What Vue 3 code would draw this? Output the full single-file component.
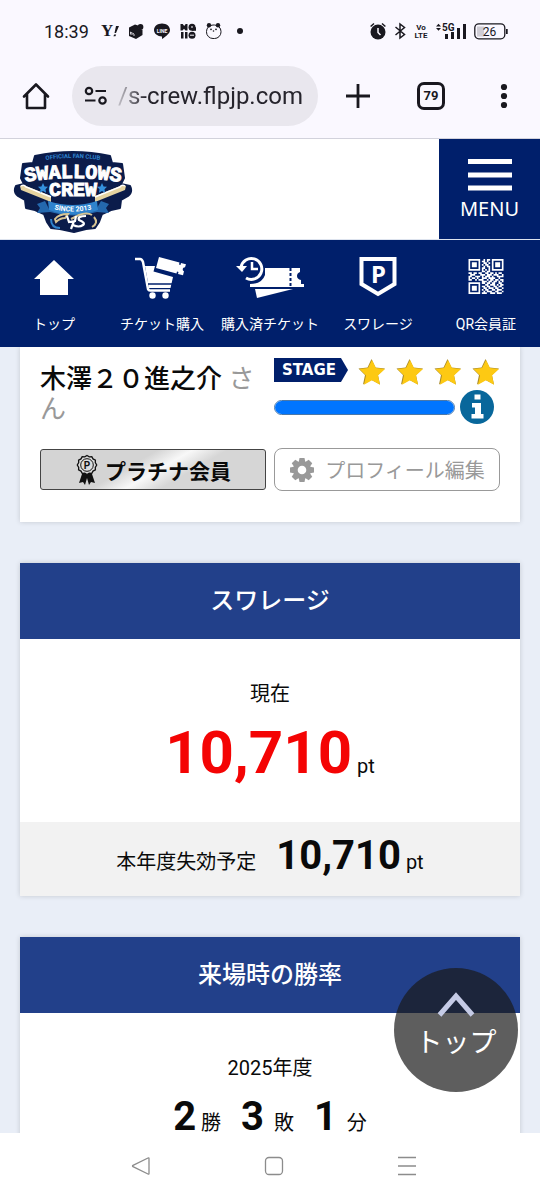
<script setup>
const url = '/s-crew.flpjp.com'

const navItems = [
  { id: 'home', label: 'トップ' },
  { id: 'cart', label: 'チケット購入' },
  { id: 'bought', label: '購入済チケット' },
  { id: 'point', label: 'スワレージ' },
  { id: 'qr', label: 'QR会員証' },
]

const qrRows = [
  '111111100101101111111',
  '100000101101001000001',
  '101110100110101011101',
  '101110101011001011101',
  '101110100101101011101',
  '100000101100101000001',
  '111111101010101111111',
  '000000001101100000000',
  '110110110011011010110',
  '011100011101110111001',
  '110011101011101001111',
  '101101001110111100100',
  '110010111001011011011',
  '000000001110110110101',
  '111111101101101100110',
  '100000100011011101011',
  '101110101101100110110',
  '101110100110111011001',
  '101110101011001101110',
  '100000100101110011001',
  '111111101110011101110',
]
const qrCells = qrRows.flatMap((row, y) =>
  [...row].flatMap((c, x) => (c === '1' ? [`M${x} ${y}h1v1h-1z`] : []))
).join('')

const results = [
  { value: '2', unit: '\u00a0勝' },
  { value: '3', unit: '\u00a0\u00a0敗' },
  { value: '1', unit: '\u00a0\u00a0分' },
]
</script>

<template>
  <div class="screen">
    <div class="status">
      <div class="status-left">
        <span class="time">18:39</span>
        <svg viewBox="0 0 18 18" width="18" height="18"><text x="0" y="14" class="yahoo">Y</text><path d="M15 4h3l-3 7h-1.500zM13.200 12.500h2l-.8 1.800h-2z" /></svg>
        <svg viewBox="0 0 18 18" width="18" height="18"><path d="M2 5.500l6-3 3 1v3l4.500 1.500v5L9 17l-7-3z" /><circle cx="13.500" cy="5" r="2.900" /><path d="M3.500 12.500V10l1.500 1v2M5.500 11l1.500 1v2" fill="none" stroke="#faf8ff" stroke-width=".8" /></svg>
        <svg viewBox="0 0 18 18" width="18" height="18"><path d="M9 1.500c4.500 0 8 2.800 8 6.500 0 3.300-3.500 6-8 9v-2.600C4.500 14.400 1 11.700 1 8s3.500-6.500 8-6.500z" /><text x="9" y="10.500" class="line">LINE</text></svg>
        <svg viewBox="0 0 18 18" width="18" height="18"><path d="M1.500 2h2.200l1.500 2 1.500-2h1.800v6.500H6.500L5 6.700 3.500 8.500h-2zM2 10h2.500v6.500H2zM6 10h2.500v6.500H6z" /><circle cx="13" cy="5.300" r="3.500" /><circle cx="13" cy="13.200" r="3.500" /><path d="M13 5.300h4v3.500h-4z" /><path d="M12 5h2M11 13.200h4" stroke="#faf8ff" /></svg>
        <svg viewBox="0 0 18 18" width="18" height="18"><rect x="1.500" y="3" width="14.500" height="13.500" rx="6.500" fill="none" stroke="#19181f" /><circle cx="4" cy="3.300" r="2.200" /><circle cx="13" cy="3.300" r="2.200" /><circle cx="6" cy="7.300" r=".9" /><circle cx="11" cy="7.300" r=".9" /><circle cx="8.500" cy="9" r=".8" /></svg>
        <svg viewBox="0 0 18 18" width="18" height="18"><circle cx="9" cy="9" r="3" /></svg>
      </div>
      <div class="status-right">
        <svg viewBox="0 0 16 18" width="16" height="18"><circle cx="8" cy="10" r="7.500" /><path d="M.6 4.500L4 1.500M15.400 4.500L12 1.500" stroke="#19181f" stroke-width="1.500" /><path d="M8 6v4.500l2.500 2.500" fill="none" stroke="#faf8ff" stroke-width="1.500" /></svg>
        <svg viewBox="0 0 12 18" width="12" height="18"><path d="M1.500 5l9 7.500L6 16V2l4.500 3.500-9 7.500" fill="none" stroke="#19181f" stroke-width="1.500" /></svg>
        <svg viewBox="0 0 14 18" width="14" height="18"><text x="7" y="8" class="tiny">Vo</text><text x="7" y="16" class="tiny">LTE</text></svg>
        <svg viewBox="0 0 30 18" width="30" height="18"><path d="M0 4.500l2.500-2.800L5 4.500zM0 6h5L2.500 8.800zM9 12h3v5H9zM15 10h3v7h-3zM21 6h3v11h-3zM27 2h3v15h-3z" /><text x="6" y="9" class="five">5G</text></svg>
        <svg viewBox="0 0 34 18" width="34" height="18"><path d="M3 4.500h7v10H3z" fill="#cfcdd5" /><rect x=".8" y="1.800" width="30" height="15" rx="4" fill="none" stroke="#19181f" stroke-width="1.300" /><path d="M32 7h1.700v5H32z" /><text x="15.500" y="13.500" class="batt">26</text></svg>
      </div>
    </div>

    <div class="toolbar">
      <button class="home-btn" aria-label="ホーム">
        <svg viewBox="0 0 28 28" width="28" height="28"><path d="M2 14.500L14 2.500l12 12M5 12v14h18V12" fill="none" stroke="#19181f" stroke-width="2.600" stroke-linejoin="round" stroke-linecap="round" /></svg>
      </button>
      <div class="pill">
        <svg viewBox="0 0 24 20" width="24" height="20"><g fill="none" stroke="#19181f" stroke-width="2.200"><circle cx="5" cy="5" r="3.200" /><circle cx="18.500" cy="14.500" r="3.200" /><path d="M11.500 5H22M1 14.500h10.500" /></g></svg>
        <input class="url" type="text" :value="url" aria-label="アドレス" readonly />
      </div>
      <div class="tools">
        <button class="tool" aria-label="新しいタブ">
          <svg viewBox="0 0 24 24" width="24" height="24"><path d="M12 0v24M0 12h24" stroke="#19181f" stroke-width="2.800" /></svg>
        </button>
        <button class="tool" aria-label="タブ 79"><span class="tabs">79</span></button>
        <button class="tool" aria-label="メニュー">
          <svg viewBox="0 0 8 26" width="8" height="26"><circle cx="4" cy="4" r="3.100" /><circle cx="4" cy="13" r="3.100" /><circle cx="4" cy="22" r="3.100" /></svg>
        </button>
      </div>
    </div>

    <header class="site-head">
      <a class="logo" href="#" aria-label="SWALLOWS CREW">
        <svg viewBox="0 0 120 84" width="120" height="84">
          <path d="M22 7Q60-1 97 7l2 7 10 1 2 14-3 6 9 2q3 6-2 10l-7 4-1 8-9 2-9 4-3 8-4 6-9 1-12 3-14-3-9-1-4-6-3-8-9-4-9-2-1-8-7-4q-5-4-2-10l8-2-3-6 2-14 10-1z" fill="#0b1c4b" stroke="#0b1c4b" stroke-width="2" stroke-linejoin="round" />
          <path d="M7 37q3-2 6 0l25 10v6L8 41zM113 37q-3-2-6 0L82 47v6l30-12z" fill="#e5d3a0" />
          <path d="M8 37q3-2 5 1l25 10M112 37q-3-2-5 1L82 48" fill="none" stroke="#fff" stroke-width="1.500" />
          <path d="M24 55l8-3 4 8 48-1 4-7 8 3-3 4 3 5-12-1Q60 70 37 63l-13 1 3-5z" fill="#2468ae" />
          <path d="M35 52q25 8 49 0l1 9q-25 9-49 0z" fill="#2f83cd" />
          <path d="M30 34l1.600 3.400 3.400.4-2.500 2.400.6 3.600-3.100-1.800-3.100 1.800.6-3.600-2.500-2.400 3.400-.4zM89 34l1.600 3.400 3.400.4-2.500 2.400.6 3.600-3.100-1.800-3.100 1.800.6-3.600-2.500-2.400 3.400-.4z" fill="#3490dd" />
          <path d="M42 70q4-5 13-5l-3 4q-5 0-9 4zM79 66q-5-3-13 0l-8 4M81 68q5 6-2 10" fill="none" stroke="#d7c493" stroke-width="2" />
          <path d="M38 70q0 9 9 9" fill="none" stroke="#2f83cd" stroke-width="2" />
          <path id="club-arc" d="M22 13Q60 5 98 13" fill="none" />
          <path id="team-arc" d="M6 34Q60 24 114 34" fill="none" />
          <path id="since-arc" d="M35 59Q60 66 85 59" fill="none" />
          <text class="lg-club"><textPath href="#club-arc" startOffset="50%">OFFICIAL FAN CLUB</textPath></text>
          <text class="lg-team"><textPath href="#team-arc" startOffset="50%">SWALLOWS</textPath></text>
          <text x="60" y="47" class="lg-team">CREW</text>
          <text class="lg-since"><textPath href="#since-arc" startOffset="50%">SINCE 2013</textPath></text>
          <path d="M54 67l2 6 6-1 1-5M61 72l-3 8M73 67q-9 0-7 4 7 3 4 5-4 3-10 0" fill="none" stroke="#fff" stroke-width="2.200" />
        </svg>
      </a>
      <button class="menu">
        <svg viewBox="0 0 44 34" width="44" height="34"><path d="M0 1h44v5H0zM0 14.500h44v5H0zM0 27.500h44v5H0z" fill="#fff" /></svg>
        <span>MENU</span>
      </button>
    </header>

    <nav class="site-nav">
      <a v-for="n in navItems" :key="n.id" href="#" class="nav-item">
        <svg v-if="n.id === 'home'" viewBox="0 0 72 48" width="72" height="48"><path d="M36 6L56 25h-6v16H22V25h-6z" /></svg>
        <svg v-else-if="n.id === 'cart'" viewBox="0 0 72 48" width="72" height="48">
          <path d="M9 5h5q2 0 3 3l5 27q.5 1.500 2 1.500h20" fill="none" stroke="#fff" stroke-width="2.500" />
          <path d="M19 12h10l-1.500 5.500L47 23l-2.500 11H23z" />
          <path d="M22 30h24" stroke="#001f6b" stroke-width="1.500" />
          <path d="M33 3l20.500 5.500-.5 2 1.500.4.500-2 5 1.300-1 3q-2 0-2.300 1.800-.2 1.700 1.300 2.300l-1 4-5-1.300.5-2-1.500-.4-.5 2L30 14z" />
          <circle cx="26.500" cy="41.500" r="3.200" /><circle cx="39.500" cy="41.500" r="3.200" />
        </svg>
        <svg v-else-if="n.id === 'bought'" viewBox="0 0 72 48" width="72" height="48">
          <path d="M7 13A10.500 10.500 0 1 1 12 24" fill="none" stroke="#fff" stroke-width="3" />
          <path d="M2 12h11l-5 6z" /><path d="M18 8v7h6" fill="none" stroke="#fff" stroke-width="2.500" />
          <path d="M31 14h35v4q-3 1-3 4t4 4v4h3v3H16v-3q12 0 15-9z" />
          <path d="M56.500 14v19" stroke="#001f6b" stroke-width="2" stroke-dasharray="3 2" />
          <path d="M21 35h38L23 44z" />
        </svg>
        <svg v-else-if="n.id === 'point'" viewBox="0 0 72 48" width="72" height="48">
          <path d="M19.500 5h33v25L36 40 19.500 30z" fill="none" stroke="#fff" stroke-width="4" />
          <text x="36.500" y="29" class="p-mark">P</text>
        </svg>
        <svg v-else viewBox="0 0 72 48" width="72" height="48"><g transform="translate(18.500 5) scale(1.667)"><path :d="qrCells" /></g></svg>
        <span>{{ n.label }}</span>
      </a>
    </nav>

    <main class="page">
      <section class="card profile">
        <p class="name"><strong>木澤２０進之介</strong> さん</p>
        <div class="rank">
          <div class="stage-row">
            <span class="stage">STAGE</span>
            <div class="stars">
              <svg v-for="i in 4" :key="i" viewBox="0 0 28 28" width="28" height="28"><path d="M13.500 1l4 8.500 9.500 1-7 6.500 2 9.500-8.500-4.500L5 26.500 7 17 .5 10.500l9-1z" fill="#a98a28" /><path d="M14 2l4 8 9 1-7 6.500 2 9.200-8-4.500-8 4.500L8 17.500 1.500 11l8.500-1z" fill="#fdc913" /></svg>
            </div>
          </div>
          <div class="progress-row">
            <progress class="bar" value="100" max="100" aria-label="ステージ進捗"></progress>
            <button class="info" aria-label="ステージについて">
              <svg viewBox="0 0 34 34" width="34" height="34"><circle cx="17" cy="17" r="17" fill="#08679b" /><path d="M14.500 4.500h6v5h-6zM12 13h9v11h2.500v4.500h-12V24H15v-6.500h-3z" fill="#fff" /></svg>
            </button>
          </div>
        </div>
        <button class="grade">
          <svg viewBox="0 0 24 32" width="24" height="32">
            <path d="M7 20l-3 9 4-1 2 3 2-7 2 7 2-3 4 1-3-9z" fill="#111" />
            <path d="M12 1.500l2.200 1.300 2.600-.2 1.200 2.300 2.400 1.200-.1 2.600 1.400 2.300-1.400 2.300.1 2.600-2.400 1.200-1.200 2.300-2.600-.2L12 20.500l-2.200-1.300-2.600.2L6 17.100l-2.400-1.200.1-2.600L2.300 11l1.400-2.300-.1-2.600L6 4.900l1.200-2.300 2.600.2z" fill="#dcdcdc" stroke="#111" stroke-width="1.300" />
            <circle cx="12" cy="11" r="6.300" fill="none" stroke="#111" /><text x="12" y="14.500" class="medal-p">P</text>
          </svg>
          <span>プラチナ会員</span>
        </button>
        <button class="edit">
          <svg viewBox="0 0 26 26" width="26" height="26"><g fill="#999"><circle cx="13" cy="13" r="9" /><path id="tooth" d="M10.500 1h5l1 5h-7zM10.500 25h5l1-5h-7z" /><use href="#tooth" transform="rotate(45 13 13)" /><use href="#tooth" transform="rotate(90 13 13)" /><use href="#tooth" transform="rotate(135 13 13)" /></g><circle cx="13" cy="13" r="4.300" fill="#fff" /></svg>
          <span>プロフィール編集</span>
        </button>
      </section>

      <section class="card">
        <h2 class="title">スワレージ</h2>
        <div class="body points">
          <p class="caption">現在</p>
          <p class="big"><strong>10,710</strong> pt</p>
        </div>
        <p class="expire"><span>本年度失効予定</span><span><strong>10,710</strong> pt</span></p>
      </section>

      <section class="card">
        <h2 class="title">来場時の勝率</h2>
        <div class="body">
          <p class="caption">2025年度</p>
          <p class="record"><span v-for="r in results" :key="r.value"><strong>{{ r.value }}</strong>{{ r.unit }}</span></p>
        </div>
      </section>

      <a class="to-top" href="#">
        <svg viewBox="0 0 38 26" width="38" height="26"><path d="M2.500 24L19 5l16.500 19" fill="none" stroke="#c5cbe6" stroke-width="5" /></svg>
        <span>トップ</span>
      </a>
    </main>

    <div class="sys-nav">
      <button aria-label="戻る"><svg viewBox="0 0 22 22" width="22" height="22"><path d="M19 3.500v15q0 1-1 .5L3 11.700q-1-.7 0-1.400L18 3q1-.5 1 .5z" /></svg></button>
      <button aria-label="ホーム画面"><svg viewBox="0 0 22 22" width="22" height="22"><rect x="2.500" y="2.500" width="17" height="17" rx="3.500" /></svg></button>
      <button aria-label="履歴"><svg viewBox="0 0 22 22" width="22" height="22"><path d="M2 2.500h18M2 11h18M2 19.500h18" /></svg></button>
    </div>
  </div>
</template>

<style>
body {
  margin: 0;
}
</style>

<style scoped>
.screen {
  height: 100vh;
  display: flex;
  flex-direction: column;
  font-family: Roboto, "Noto Sans CJK JP", sans-serif;
  font-size: 20px;
  color: #0a0a0a;
  background: #fff;
}
p, h2 { margin: 0; }
button {
  padding: 0;
  border: 0;
  background: none;
  font: inherit;
  color: inherit;
}
a { color: inherit; text-decoration: none; }
svg { display: block; flex: none; }

.status {
  display: flex;
  justify-content: space-between;
  align-items: center;
  height: 62px;
  padding: 0 32px 0 44px;
  background: #faf8ff;
  fill: #19181f;
}
.status-left, .status-right { display: flex; align-items: center; gap: 8px; }
.time { font-size: 18px; color: #19181f; margin-right: 4px; }
.yahoo { font: bold 17px "Liberation Serif", serif; }
.line { font: bold 5px Roboto, sans-serif; fill: #faf8ff; text-anchor: middle; }
.tiny { font: bold 8px Roboto, sans-serif; text-anchor: middle; }
.five { font: bold 10px Roboto, sans-serif; }
.batt { font: 12px Roboto, sans-serif; text-anchor: middle; }

.toolbar {
  display: flex;
  align-items: center;
  padding: 2px 0 10px;
  background: #faf8ff;
  fill: #19181f;
  border-bottom: 1px solid #d2d2dc;
}
.home-btn, .tool {
  height: 64px;
  display: flex;
  align-items: center;
  justify-content: center;
}
.home-btn { width: 72px; }
.tools {
  display: flex;
  justify-content: space-between;
  width: 174px;
  padding: 0 22px 0 26px;
}
.tool { width: 28px; }
.pill {
  flex: 1;
  min-width: 0;
  display: flex;
  align-items: center;
  gap: 10px;
  height: 60px;
  padding: 0 8px 0 12px;
  box-sizing: border-box;
  border-radius: 30px;
  background: #e9e7ee;
}
.url {
  flex: 1;
  min-width: 0;
  padding: 0;
  border: 0;
  outline: 0;
  background: none;
  color: #26242c;
  font: 24px Roboto, sans-serif;
  mask-image: linear-gradient(to right, rgba(0, 0, 0, 0.2), #000 28px);
}
.tabs {
  width: 28px;
  height: 28px;
  box-sizing: border-box;
  border: 3px solid #19181f;
  border-radius: 7px;
  color: #19181f;
  font: bold 13px/22px Roboto, sans-serif;
  text-align: center;
}

.site-head {
  display: flex;
  justify-content: space-between;
  align-items: flex-start;
  height: 100px;
  border-bottom: 1px solid #dde3ee;
}
.logo { padding: 10px 13px; }
.lg-club { font: bold 6px Roboto, sans-serif; fill: #2f83cd; text-anchor: middle; }
.lg-team {
  font: bold 20px "Liberation Mono", monospace;
  fill: #fff;
  stroke: #fff;
  stroke-width: 1;
  text-anchor: middle;
}
.lg-since { font: bold 7px Roboto, sans-serif; fill: #fff; text-anchor: middle; }
.menu {
  width: 101px;
  height: 100px;
  box-sizing: border-box;
  padding-top: 4px;
  display: flex;
  flex-direction: column;
  align-items: center;
  justify-content: center;
  gap: 2px;
  background: #001f6b;
  color: #fff;
  font: 20px/30px "Noto Sans", sans-serif;
}

.site-nav {
  display: grid;
  grid-template-columns: repeat(5, 1fr);
  height: 107px;
  background: #001f6b;
}
.nav-item {
  display: flex;
  flex-direction: column;
  align-items: center;
  padding-top: 14px;
  gap: 10px;
  color: #fff;
  fill: #fff;
  font-size: 14px;
  line-height: 24px;
  white-space: nowrap;
}
.p-mark { font: bold 24px "Noto Sans", sans-serif; text-anchor: middle; }

.page {
  position: relative;
  flex: 1;
  min-height: 0;
  overflow: hidden;
  display: flex;
  flex-direction: column;
  gap: 41px;
  padding: 0 20px;
  background: #e9eef7;
}
.card {
  flex: none;
  background: #fff;
  box-shadow: 0 0 5px rgba(0, 0, 0, 0.16);
}
.profile {
  display: grid;
  grid-template-columns: minmax(0, 1fr) minmax(0, 1fr);
  column-gap: 8px;
  row-gap: 24px;
  align-items: center;
  padding: 11px 20px 31px;
}
.name {
  align-self: start;
  padding-top: 6px;
  font-size: 26px;
  line-height: 30px;
  color: #999;
}
.name strong { color: #0a0a0a; font-weight: 500; }
.stage-row { display: flex; align-items: flex-start; gap: 10px; }
.stage {
  width: 74px;
  padding-left: 8px;
  box-sizing: border-box;
  font: bold 15px/24px "DejaVu Sans", sans-serif;
  color: #fff;
  background: #001f6b;
  clip-path: polygon(0 0, 67px 0, 100% 50%, 67px 100%, 0 100%);
}
.stars { flex: 1; display: flex; justify-content: space-between; }
.progress-row { display: flex; align-items: center; gap: 5px; padding: 4px 6px 0 0; }
.bar {
  flex: 1;
  min-width: 0;
  height: 15px;
  appearance: none;
  border: 1px solid #4b78a8;
  border-radius: 8px;
  overflow: hidden;
  box-sizing: border-box;
}
.bar::-webkit-progress-bar { background: #eee; }
.bar::-webkit-progress-value { background: #0075ff; }
.grade, .edit {
  display: flex;
  align-items: center;
  justify-content: center;
  box-sizing: border-box;
}
.grade {
  height: 41px;
  gap: 6px;
  border: 1px solid #444;
  border-radius: 3px;
  background: linear-gradient(150deg, #d4d4d4 40%, #f8f8f8 52%, #d6d6d6 64%);
  font-size: 21px;
  font-weight: 700;
}
.edit {
  height: 43px;
  gap: 10px;
  border: 1px solid #999;
  border-radius: 8px;
  background: #fff;
  color: #999;
}
.medal-p { font: bold 10px Roboto, sans-serif; fill: #111; text-anchor: middle; }

.title {
  font-size: 24px;
  line-height: 76px;
  font-weight: 500;
  text-align: center;
  color: #fff;
  background: #22408a;
}
.body { padding-top: 40px; text-align: center; }
.points { padding-bottom: 39px; }
.caption { line-height: 30px; }
.big { padding-top: 14px; line-height: 30px; }
.big strong { font-size: 60px; line-height: 60px; color: #f40404; }
.expire {
  display: flex;
  justify-content: center;
  align-items: baseline;
  gap: 20px;
  padding: 14px 0 19px;
  line-height: 30px;
  background: #f2f2f2;
}
.expire strong, .record strong { font-size: 40px; line-height: 40px; }
.record {
  display: flex;
  justify-content: center;
  gap: 20px;
  padding-top: 14px;
  line-height: 30px;
}

.to-top {
  position: absolute;
  right: 22px;
  bottom: 41px;
  width: 124px;
  height: 124px;
  box-sizing: border-box;
  padding-top: 23px;
  border-radius: 50%;
  display: flex;
  flex-direction: column;
  align-items: center;
  gap: 6px;
  background: rgba(26, 26, 26, 0.7);
  color: #fff;
  font-size: 27px;
  line-height: 40px;
}

.sys-nav {
  display: flex;
  justify-content: space-around;
  align-items: center;
  height: 66px;
  padding: 0 66px 0 74px;
  background: #fff;
}
.sys-nav svg { fill: none; stroke: #8c8c8c; stroke-width: 1.3; }
</style>
